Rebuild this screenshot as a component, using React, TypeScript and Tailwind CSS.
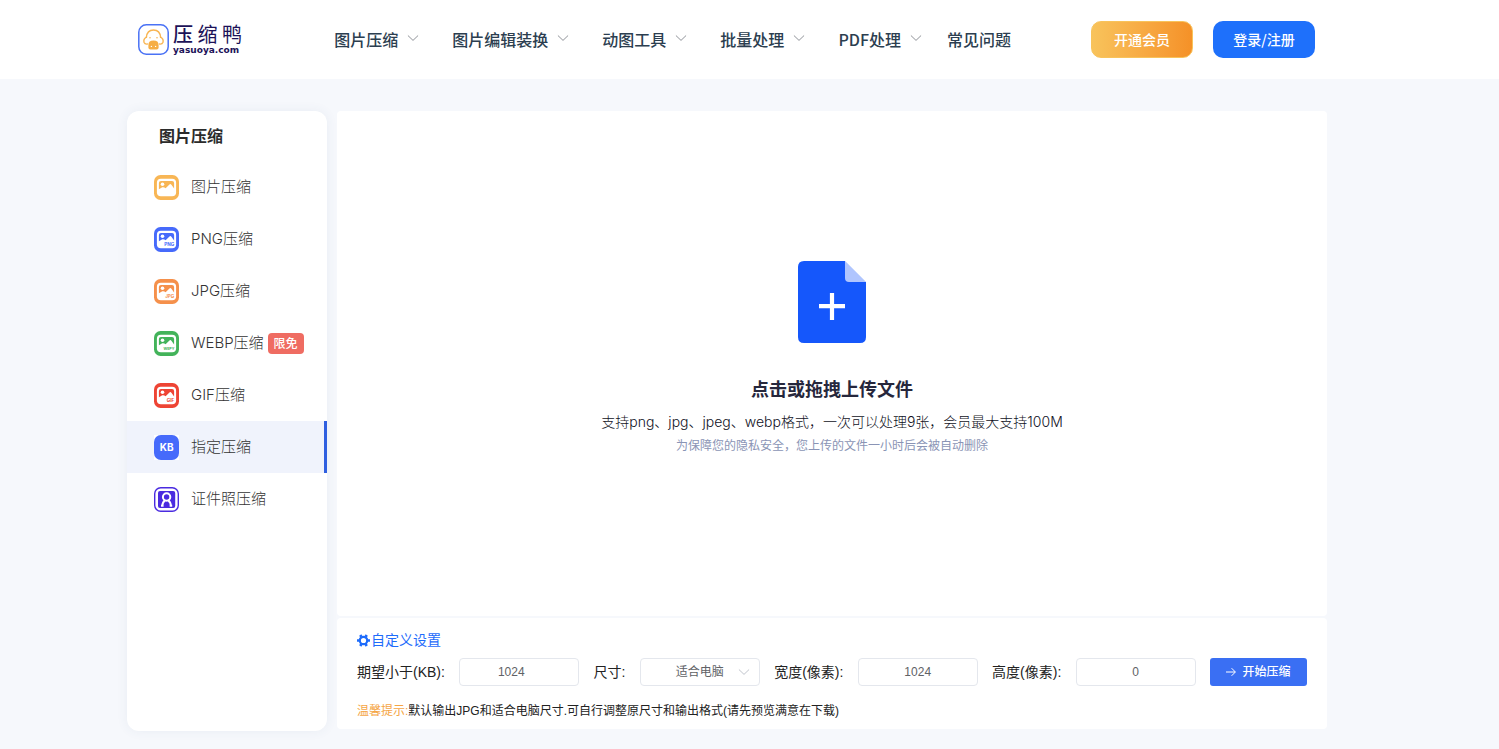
import React, { useState } from 'react';

const NAV_ITEMS = ['图片压缩', '图片编辑装换', '动图工具', '批量处理', 'PDF处理'];

interface MenuItem {
  label: string;
  icon: React.ReactNode;
  badge?: string;
}

const Chevron = ({ className }: { className: string }) => (
  <svg className={className} viewBox="0 0 12 12" fill="none" stroke="currentColor" strokeLinecap="round" strokeLinejoin="round" aria-hidden="true">
    <path d="M1.2 3.8 6 8.4 10.8 3.8" />
  </svg>
);

// Rounded frame with a small landscape, optional format tag in the corner
const PictureIcon = ({ color, tag }: { color: string; tag?: string }) => (
  <svg className="size-[25px] shrink-0" viewBox="0 0 25 25" aria-hidden="true">
    <rect width="25" height="25" rx="6.5" fill={color} />
    <rect x="2.9" y="3.7" width="19.2" height="17.6" rx="4" fill="#fff" />
    <path
      d="M4.9 14.2V8Q4.9 5.9 7 5.9H18Q20.1 5.9 20.1 8V13.6L17.4 9.8Q16.4 8.5 15.2 9.7L11.6 13.3L10.4 12.5Q9.4 11.9 8.3 12.3Z"
      fill={color}
    />
    <circle cx="8.5" cy="9.2" r="1.8" fill="#fff" />
    {tag && (
      <text x="20.3" y="18.5" textAnchor="end" fontSize={tag.length > 3 ? 3.6 : 4.6} fontWeight="700" fill={color}>
        {tag}
      </text>
    )}
  </svg>
);

const KbIcon = () => (
  <svg className="size-[25px] shrink-0" viewBox="0 0 25 25" aria-hidden="true">
    <rect width="25" height="25" fill="#fff" />
    <rect width="25" height="25" rx="7" fill="#466afb" />
    <text x="12.7" y="16" textAnchor="middle" fontFamily="Inter, sans-serif" fontSize="10" fontWeight="700" fill="#fff">
      KB
    </text>
  </svg>
);

const PortraitIcon = () => (
  <svg className="size-[25px] shrink-0" viewBox="0 0 25 25" fill="none" aria-hidden="true">
    <rect x="0.7" y="0.7" width="23.6" height="23.6" rx="6" stroke="#4a2be0" strokeWidth="1.4" />
    <rect x="4" y="4" width="17.2" height="17" rx="2" fill="#4a2be0" />
    <circle cx="12.6" cy="10" r="3.7" stroke="#fff" strokeWidth="2" />
    <path d="M8.2 19.2Q8.6 15 11 13.4M17 19.2Q16.6 15 14.2 13.4M7 18.8H9.6M15.6 18.8H18.2" stroke="#fff" strokeWidth="1.9" />
  </svg>
);

const MENU: MenuItem[] = [
  { label: '图片压缩', icon: <PictureIcon color="#f8b655" /> },
  { label: 'PNG压缩', icon: <PictureIcon color="#466afb" tag="PNG" /> },
  { label: 'JPG压缩', icon: <PictureIcon color="#f5904b" tag="JPG" /> },
  { label: 'WEBP压缩', icon: <PictureIcon color="#43b35a" tag="WEPY" />, badge: '限免' },
  { label: 'GIF压缩', icon: <PictureIcon color="#ee4434" tag="GIF" /> },
  { label: '指定压缩', icon: <KbIcon /> },
  { label: '证件照压缩', icon: <PortraitIcon /> },
];

const Logo = () => (
  <a href="#" className="flex items-center gap-1 text-[#1c1258]">
    <svg className="size-[31px]" viewBox="0 0 31 31" fill="none" aria-hidden="true">
      <rect x="0.8" y="0.8" width="29.4" height="29.4" rx="7.5" stroke="#4a72f5" strokeWidth="1.5" />
      <g stroke="#f8b552" strokeWidth="1.4" strokeLinecap="round">
        <path d="M8.4 13.4Q9 6 15.5 6Q22 6 22.6 13.4" />
        <path d="M8.4 13.2Q5.2 15 6 18.2Q7 20.6 9.4 20" />
        <path d="M22.6 13.2Q25.8 15 25 18.2Q24 20.6 21.6 20" />
      </g>
      <circle cx="12" cy="13.8" r="0.8" fill="#f8b552" />
      <circle cx="19" cy="13.8" r="0.8" fill="#f8b552" />
      <path d="M10.4 21Q10.4 16.6 15.5 16.6Q20.6 16.6 20.6 21V23.4Q20.6 25.4 18.6 25.4H12.4Q10.4 25.4 10.4 23.4Z" fill="#f6ae45" />
      <circle cx="13.4" cy="22.4" r="0.7" fill="#fff" />
      <circle cx="17.6" cy="22.4" r="0.7" fill="#fff" />
    </svg>
    <span className="flex w-[69px] flex-col pb-0.5">
      <span className="flex justify-between text-xl leading-[22px]">
        <span className="font-medium">压</span>
        <span>缩</span>
        <span>鸭</span>
      </span>
      <span className="font-['DejaVu_Sans',sans-serif] text-[9px] font-bold leading-[8px]">yasuoya.com</span>
    </span>
  </a>
);

const Header = () => (
  <header className="bg-white">
    <div className="mx-auto flex h-[79px] max-w-[1245px] items-center pl-[11px] pr-[57px]">
      <Logo />
      <nav className="ml-auto flex items-center gap-[25px] pb-0.5 font-['Noto_Sans_CJK_SC',sans-serif] text-base font-medium text-[#2c3e50]">
        <div className="flex items-center gap-[33px]">
          {NAV_ITEMS.map((item) => (
            <a key={item} href="#" className="flex items-center gap-[9px]">
              {item}
              <Chevron className="mb-0.5 size-3 text-[#909399]" />
            </a>
          ))}
        </div>
        <a href="#">常见问题</a>
      </nav>
      <div className="ml-20 flex gap-5 font-['Noto_Sans_CJK_SC',sans-serif] text-sm font-medium text-white">
        <button className="h-[37px] w-[102px] rounded-[10px] border border-[#f8c35b] bg-linear-to-r from-[#f8c35b] to-[#f59127] pb-0.5">开通会员</button>
        <button className="h-[37px] w-[102px] rounded-[10px] bg-[#1e70fb] pb-0.5">登录/注册</button>
      </div>
    </div>
  </header>
);

const Sidebar = ({ active, onSelect }: { active: string; onSelect: (label: string) => void }) => (
  <aside className="min-h-[620px] w-[200px] shrink-0 rounded-xl bg-white shadow-[0_0_12px_rgba(60,80,130,0.07)]">
    <h2 className="pl-8 pt-0.5 text-base font-bold leading-[48px] text-[#2b2b2b]">图片压缩</h2>
    <ul>
      {MENU.map(({ label, icon, badge }) => (
        <li key={label}>
          <button
            onClick={() => onSelect(label)}
            className={`flex h-[52px] w-full items-center border-r-3 pl-[27px] font-['Inter','Noto_Sans_CJK_SC',sans-serif] text-[15px] font-light text-[#333] ${
              active === label ? 'border-[#2f5fe0] bg-[#f0f3fc]' : 'border-transparent'
            }`}
          >
            {icon}
            <span className="ml-3">{label}</span>
            {badge && <span className="ml-1 rounded bg-[#ef6c62] px-1.5 text-xs font-medium leading-[21px] text-white">{badge}</span>}
          </button>
        </li>
      ))}
    </ul>
  </aside>
);

const UploadArea = () => (
  <label className="flex min-h-[505px] cursor-pointer flex-col items-center rounded bg-white pt-[150px]">
    <input type="file" multiple className="sr-only" />
    <svg className="h-[82px] w-[68px]" viewBox="0 0 68 82" aria-hidden="true">
      <path d="M6 0H47L68 21V76Q68 82 62 82H6Q0 82 0 76V6Q0 0 6 0Z" fill="#1557fb" />
      <path d="M47 0 68 21H51Q47 21 47 17Z" fill="#b0c5fe" />
      <path d="M47 0H68V21Z" fill="#fff" />
      <path d="M34 32V59M21 45.2H47" stroke="#fff" strokeWidth="4.2" />
    </svg>
    <span className="mt-8 text-lg font-bold leading-[30px] text-[#26273c]">点击或拖拽上传文件</span>
    <span className="mt-1 font-['Inter','Noto_Sans_CJK_SC',sans-serif] text-sm font-light leading-[26px] text-[#101124]">
      支持png、jpg、jpeg、webp格式，一次可以处理9张，会员最大支持100M
    </span>
    <span className="text-xs leading-[22px] text-[#8a94b5]">为保障您的隐私安全，您上传的文件一小时后会被自动删除</span>
  </label>
);

const Settings = () => {
  const field = 'h-7 w-[120px] rounded border border-[#e4e7ed] bg-white text-center text-xs text-[#606266] outline-none';

  return (
    <section className="rounded bg-white px-5 pb-2 pt-3 text-[#222]">
      <h3 className="flex items-center text-sm leading-5 text-[#1e6cfb]">
        <svg className="mr-px size-[13px]" viewBox="0 0 14 14" fill="none" stroke="currentColor" aria-hidden="true">
          <circle cx="7" cy="7" r="4" strokeWidth="2.4" />
          <path d="M11.5 7H14M0 7H2.5M9.3 10.9l1.2 2M3.5 1.1l1.2 2M9.3 3.1l1.2-2M3.5 12.9l1.2-2" strokeWidth="2.8" />
        </svg>
        自定义设置
      </h3>
      <div className="mt-2 flex items-center justify-between text-sm">
        <label htmlFor="size-kb">期望小于(KB):</label>
        <input id="size-kb" type="text" defaultValue="1024" className={`${field} pr-4`} />
        <label htmlFor="preset">尺寸:</label>
        <div className="relative flex">
          <select id="preset" defaultValue="pc" className={`${field} appearance-none [text-align-last:center]`}>
            <option value="pc">适合电脑</option>
            <option value="phone">适合手机</option>
            <option value="origin">原尺寸</option>
          </select>
          <Chevron className="pointer-events-none absolute right-2.5 top-2 size-3 text-[#c0c4cc]" />
        </div>
        <label htmlFor="width-px">宽度(像素):</label>
        <input id="width-px" type="text" defaultValue="1024" className={field} />
        <label htmlFor="height-px">高度(像素):</label>
        <input id="height-px" type="text" defaultValue="0" className={field} />
        <button className="flex h-7 w-[97px] items-center justify-center gap-1.5 rounded-[3px] bg-[#3a6ff3] text-xs font-medium text-white">
          <svg className="size-2.5" viewBox="0 0 10 10" fill="none" stroke="currentColor" aria-hidden="true">
            <path d="M0 5H9.2M5.6 1.2 9.4 5 5.6 8.8" />
          </svg>
          开始压缩
        </button>
      </div>
      <p className="mt-[15px] text-xs leading-5">
        <span className="text-[#f5a544]">温馨提示:</span>默认输出JPG和适合电脑尺寸.可自行调整原尺寸和输出格式(请先预览满意在下载)
      </p>
    </section>
  );
};

export default function App() {
  const [active, setActive] = useState('指定压缩');

  return (
    <div lang="zh-CN" className="min-h-screen bg-[#f6f8fc] font-['Liberation_Sans','Noto_Sans_CJK_SC',sans-serif]">
      <Header />
      <div className="mx-auto flex max-w-[1245px] items-start gap-2.5 pb-4 pr-[45px] pt-8">
        <Sidebar active={active} onSelect={setActive} />
        <main className="flex min-w-0 flex-1 flex-col gap-0.5">
          <UploadArea />
          <Settings />
        </main>
      </div>
    </div>
  );
}
